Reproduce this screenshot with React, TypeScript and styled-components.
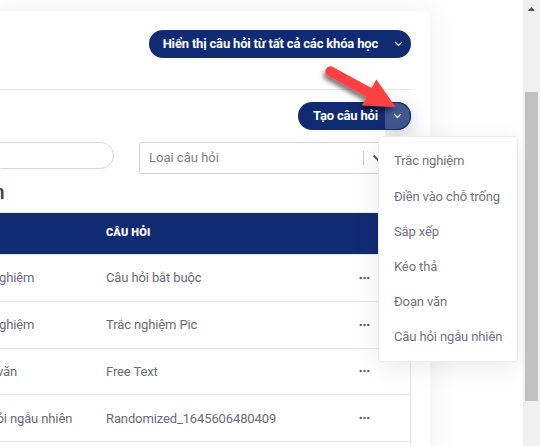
import React from "react";
import styled, { createGlobalStyle } from "styled-components";

const navy = "#112b72";

const GlobalStyle = createGlobalStyle`
  * { box-sizing: border-box; }
  body { margin: 0; background: #fff; font-family: Roboto, sans-serif; overflow: hidden; }
`;

const Page = styled.div`
  display: flex;
  width: 540px;
  height: 446px;
  overflow: hidden;
  color: #6c6a79;
  font-size: 13px;
  letter-spacing: -0.12px;
`;

const Content = styled.main`
  flex: 1;
  min-width: 0;
  height: 446px;
  overflow: hidden;
`;

const Card = styled.section`
  width: 442px;
  height: 520px;
  margin: 11px 0 0 -12px;
  padding: 19px 19px 0 12px;
  border-radius: 6px;
  background: #fff;
  box-shadow: 0 0 32px rgba(0, 0, 0, 0.07);
`;

const CardHeader = styled.header`
  display: flex;
  justify-content: flex-end;
  height: 60px;
  border-bottom: 1px solid #e9e9f1;
`;

const Actions = styled.div`
  display: flex;
  justify-content: flex-end;
  height: 52px;
  padding-top: 12px;
`;

const SplitButton = styled.div<{ $width: number }>`
  position: relative;
  display: flex;
  width: ${(p) => p.$width}px;
  height: 28px;
  border-radius: 14px;
  background: ${navy};
`;

const ButtonLabel = styled.button`
  flex: 1;
  padding: 0 7px 0 0;
  border: 0;
  background: none;
  color: #fff;
  font: 700 13px/28px Roboto, sans-serif;
  letter-spacing: -0.18px;
  text-align: right;
  white-space: nowrap;
`;

const Toggle = styled.button<{ $open?: boolean }>`
  display: flex;
  align-items: center;
  justify-content: center;
  width: 26px;
  padding: 0;
  border: ${(p) => (p.$open ? `1px solid ${navy}` : "0")};
  border-left: 0;
  border-radius: 0 14px 14px 0;
  background: ${(p) => (p.$open ? "#41558e" : "none")};
  box-shadow: ${(p) => (p.$open ? "0 5px 18px rgba(17, 43, 114, 0.26)" : "none")};
  clip-path: inset(-30px -30px -30px 0);
`;

const Menu = styled.ul`
  position: absolute;
  z-index: 2;
  top: 34px;
  left: 80px;
  width: 140px;
  height: 226px;
  margin: 0;
  padding: 7px 0 0;
  border: 1px solid #ededf1;
  border-radius: 4px;
  background: #fff;
  list-style: none;
  box-shadow: 0 5px 24px rgba(0, 0, 0, 0.09);
`;

const MenuItem = styled.li`
  height: 35px;
  padding-left: 15px;
  color: #74727f;
  line-height: 34px;
  white-space: nowrap;

  &:first-child {
    height: 36px;
  }
`;

const Pointer = styled.svg`
  position: absolute;
  z-index: 3;
  top: -43px;
  left: 20px;
`;

const Filters = styled.div`
  display: flex;
  justify-content: space-between;
  align-items: flex-start;
`;

const Search = styled.input`
  width: 126px;
  height: 27px;
  margin-left: -12px;
  border: 1px solid #d6d5e0;
  border-radius: 14px;
  background: #fff;
`;

const Select = styled.div`
  display: flex;
  align-items: center;
  width: 272px;
  height: 32px;
  padding: 0 26px 1px 9px;
  border: 1px solid #d2d2dc;
  border-radius: 3px;
  color: #808080;
`;

const SelectLabel = styled.span`
  flex: 1;
  letter-spacing: 0;
`;

const Divider = styled.span`
  width: 1px;
  height: 14px;
  margin-right: 8px;
  background: #ccc;
`;

const Heading = styled.h2`
  height: 38px;
  margin: 0 0 0 -7px;
  color: #464646;
  font-size: 21px;
  font-weight: 500;
  line-height: 36px;
`;

const Table = styled.div`
  border-top: 1px solid #e9e9f1;
  border-right: 1px solid #e6e6ef;
`;

const HeadRow = styled.div`
  height: 41px;
  margin-right: -1px;
  padding: 0 0 1px 106px;
  background: ${navy};
  color: #fff;
  font-size: 11px;
  font-weight: 900;
  line-height: 40px;
  letter-spacing: 0.15px;
`;

const Row = styled.div`
  display: grid;
  grid-template-columns: 106px 253px 1fr;
  align-items: center;
  height: 46.8px;
  border-top: 1px solid #e6e6ef;
  white-space: nowrap;
`;

const TypeCell = styled.span`
  margin-left: -36px;
`;

const Scrollbar = styled.aside`
  position: relative;
  z-index: 1;
  width: 17px;
  padding: 7px 2px 0;
  background: #f0f0f0;
`;

const ScrollArrow = styled.svg`
  display: block;
  margin-left: 3px;
`;

const Thumb = styled.div`
  height: 309px;
  margin-top: 81px;
  background: #c1c1c1;
`;

const Chevron = () => (
  <svg width="9" height="6" viewBox="0 0 9 6" fill="none" stroke="#fff" strokeWidth="1.1">
    <path d="M1 1l3.5 3.5L8 1" />
  </svg>
);

const Dots = () => (
  <svg width="11" height="4" viewBox="0 0 11 4" fill="#625f70">
    <circle cx="1.7" cy="2" r="1.2" />
    <circle cx="5.5" cy="2" r="1.2" />
    <circle cx="9.3" cy="2" r="1.2" />
  </svg>
);

const kinds = ["Trắc nghiệm", "Điền vào chỗ trống", "Sắp xếp", "Kéo thả", "Đoạn văn", "Câu hỏi ngẫu nhiên"];

const questions = [
  { kind: "Trắc nghiệm", name: "Câu hỏi bắt buộc" },
  { kind: "Trắc nghiệm", name: "Trắc nghiệm Pic" },
  { kind: "Đoạn văn", name: "Free Text" },
  { kind: "Câu hỏi ngẫu nhiên", name: "Randomized_1645606480409" },
];

export default function App() {
  return (
    <>
      <GlobalStyle />
      <Page>
        <Content>
          <Card>
            <CardHeader>
              <SplitButton $width={262}>
                <ButtonLabel>Hiển thị câu hỏi từ tất cả các khóa học</ButtonLabel>
                <Toggle aria-label="Khóa học"><Chevron /></Toggle>
              </SplitButton>
            </CardHeader>
            <Actions>
              <SplitButton $width={113}>
                <ButtonLabel>Tạo câu hỏi</ButtonLabel>
                <Toggle $open aria-label="Loại câu hỏi"><Chevron /></Toggle>
                <Menu>
                  {kinds.map((kind) => <MenuItem key={kind}>{kind}</MenuItem>)}
                </Menu>
                <Pointer width="88" height="60" viewBox="318 59 88 60">
                  <defs>
                    <filter id="drop" x="-20%" y="-20%" width="140%" height="160%">
                      <feDropShadow dx="-2" dy="4" stdDeviation="2" floodColor="#000" floodOpacity="0.5" />
                    </filter>
                  </defs>
                  <path
                    d="M332 66.6L371.5 88L376.5 79.5L395.5 107L362 105.5L366.5 97L327.5 75.4A5 5 0 0 1 332 66.6Z"
                    fill="#ff4141"
                    filter="url(#drop)"
                  />
                </Pointer>
              </SplitButton>
            </Actions>
            <Filters>
              <Search aria-label="Tìm kiếm" />
              <Select>
                <SelectLabel>Loại câu hỏi</SelectLabel>
                <Divider />
                <svg width="12" height="8" viewBox="0 0 12 8" fill="none" stroke="#5b596b" strokeWidth="2">
                  <path d="M1.5 1.5L6 6l4.5-4.5" />
                </svg>
              </Select>
            </Filters>
            <Heading>n</Heading>
            <Table>
              <HeadRow>CÂU HỎI</HeadRow>
              {questions.map((q, i) => (
                <Row key={i}>
                  <TypeCell>{q.kind}</TypeCell>
                  <span>{q.name}</span>
                  <Dots />
                </Row>
              ))}
              <Row />
            </Table>
          </Card>
        </Content>
        <Scrollbar>
          <ScrollArrow width="7" height="4" viewBox="0 0 7 4" fill="#505050">
            <path d="M3.5 0L7 4H0z" />
          </ScrollArrow>
          <Thumb />
        </Scrollbar>
      </Page>
    </>
  );
}
